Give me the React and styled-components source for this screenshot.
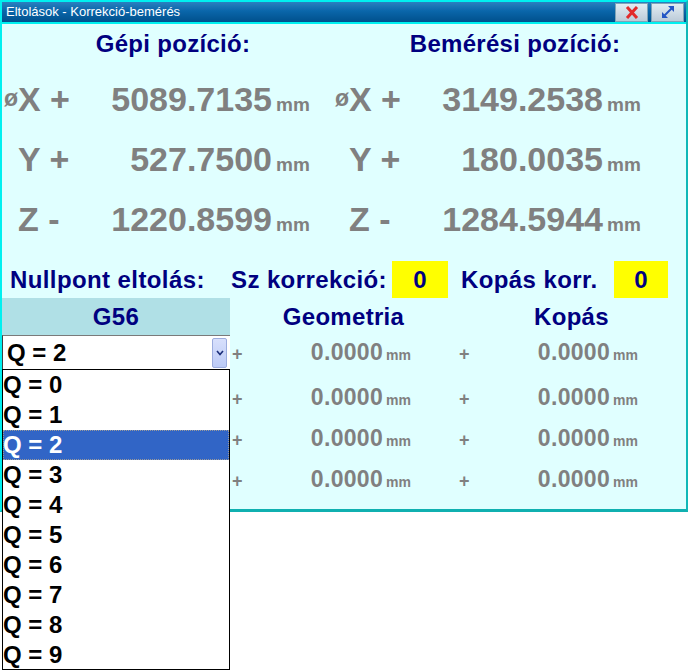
import React from 'react';
import styled, { createGlobalStyle } from 'styled-components';

const Global = createGlobalStyle`
  html, body { margin: 0; padding: 0; background: #ffffff; }
  body { font-family: "Liberation Sans", Arial, sans-serif; min-height: 672px; }
  #root { min-height: 672px; }
  * { box-sizing: border-box; }
`;

const NAVY = '#000080';
const GREY = '#808080';

const Window = styled.div`
  position: relative;
  width: 688px;
  height: 512px;
  border-left: 2px solid #00f0f0;
  border-top: 2px solid #00f0f0;
  border-right: 2px solid #10b8b8;
  border-bottom: 3px solid #10b0b0;
  background: #e0ffff;
  display: flex;
  flex-direction: column;
  overflow: visible;
`;

const TitleBar = styled.div`
  height: 22px;
  flex: none;
  border-bottom: 2px solid #00f0f0;
  background: linear-gradient(#2a80c0 0%, #0a66aa 45%, #00508c 100%);
  display: flex;
  align-items: center;
  justify-content: space-between;
  padding: 0 2px 0 4px;
`;

const TitleText = styled.span`
  color: #ffffff;
  font-size: 13px;
  line-height: 20px;
`;

const TitleButtons = styled.div`
  display: flex;
  gap: 3px;
  height: 19px;
`;

const TitleButton = styled.div`
  width: 33px;
  height: 19px;
  border: 1px solid #7fa4b8;
  background: linear-gradient(#e2ecf3, #bccbd8);
  display: flex;
  align-items: center;
  justify-content: center;
`;

const Body = styled.div`
  flex: 1;
  display: flex;
  flex-direction: column;
  overflow: visible;
`;

const HeadRow = styled.div`
  display: grid;
  grid-template-columns: 1fr 1fr;
  height: 40px;
  align-items: center;
  margin-bottom: 5px;
`;

const Heading = styled.div`
  text-align: center;
  color: ${NAVY};
  font-size: 24px;
  font-weight: bold;
  letter-spacing: 0.3px;
`;

const PosRow = styled.div`
  display: grid;
  grid-template-columns: 331px 1fr;
  height: 60px;
`;

const PosCell = styled.div`
  white-space: nowrap;
  line-height: 60px;
  font-size: 34px;
  font-weight: bold;
  color: ${GREY};
`;

const Diam = styled.span`
  display: inline-block;
  width: 16px;
  text-align: right;
  font-size: 23px;
  line-height: 1;
  vertical-align: 5px;
`;

const AxisLabel = styled.span`
  display: inline-block;
  width: 84px;
  white-space: pre;
`;

const BigValue = styled.span`
  display: inline-block;
  width: 170px;
  text-align: right;
`;

const BigUnit = styled.span`
  font-size: 19px;
  margin-left: 4px;
`;

const InfoRow = styled.div`
  display: flex;
  align-items: center;
  height: 37px;
  margin-top: 12px;
`;

const InfoLabel = styled.div`
  width: ${(p) => p.$w}px;
  margin-left: ${(p) => p.$ml || 0}px;
  padding-left: ${(p) => p.$pl || 0}px;
  color: ${NAVY};
  font-size: 24px;
  font-weight: bold;
  letter-spacing: 0.4px;
  white-space: nowrap;
`;

const YellowBox = styled.div`
  width: ${(p) => p.$w}px;
  height: 37px;
  background: #ffff00;
  color: ${NAVY};
  font-size: 24px;
  font-weight: bold;
  display: flex;
  align-items: center;
  justify-content: center;
`;

const TableHeader = styled.div`
  display: grid;
  grid-template-columns: 228px 227px 1fr;
  height: 37px;
  align-items: stretch;
`;

const HeaderCell = styled.div`
  display: flex;
  align-items: center;
  justify-content: center;
  background: ${(p) => (p.$active ? '#b0e0e6' : 'transparent')};
  color: ${NAVY};
  font-size: 24px;
  font-weight: bold;
  letter-spacing: 0.3px;
`;

const OffsetRow = styled.div`
  display: grid;
  grid-template-columns: 228px 227px 1fr;
  height: ${(p) => p.$h}px;
  margin-top: ${(p) => p.$mt || 0}px;
  align-items: center;
  overflow: visible;
`;

const Pair = styled.div`
  display: flex;
  align-items: baseline;
  color: ${GREY};
  font-weight: bold;
  white-space: nowrap;
`;

const Plus = styled.span`
  width: 24px;
  padding-left: 2px;
  font-size: 18px;
`;

const SmallValue = styled.span`
  width: 129px;
  text-align: right;
  font-size: 23px;
  letter-spacing: 0.3px;
`;

const SmallUnit = styled.span`
  font-size: 14px;
  margin-left: 3px;
`;

const ComboWrap = styled.div`
  position: relative;
  height: 34px;
  align-self: stretch;
  z-index: 10;
`;

const Combo = styled.div`
  height: 34px;
  background: #ffffff;
  border-top: 1px solid #7a7a7a;
  border-left: 1px solid #404040;
  display: flex;
  align-items: center;
  justify-content: space-between;
  padding-left: 4px;
  padding-right: 3px;
`;

const ComboText = styled.span`
  font-size: 24px;
  font-weight: bold;
  color: #000000;
`;

const ComboButton = styled.div`
  width: 15px;
  height: 30px;
  border: 1px solid #9cacde;
  border-radius: 2px;
  background: linear-gradient(#d8e0fc, #bccaf6);
  display: flex;
  align-items: center;
  justify-content: center;
`;

const List = styled.div`
  position: absolute;
  top: 34px;
  left: 0;
  width: 228px;
  height: 301px;
  background: #ffffff;
  border: 1px solid #000000;
  z-index: 10;
`;

const ListItem = styled.div`
  height: 30px;
  line-height: 30px;
  padding-left: 0;
  font-size: 24px;
  font-weight: bold;
  color: ${(p) => (p.$selected ? '#ffffff' : '#000000')};
  background: ${(p) => (p.$selected ? '#3165c6' : 'transparent')};
  outline: 1px dotted ${(p) => (p.$selected ? '#9a9a9a' : 'transparent')};
  outline-offset: -1px;
  white-space: pre;
`;

const CloseIcon = () => (
  <svg width="14" height="13" viewBox="0 0 14 13">
    <path d="M2 1 L12 12 M12 1 L2 12" stroke="#e22a2a" strokeWidth="3" fill="none" />
  </svg>
);

const MaxIcon = () => (
  <svg width="14" height="14" viewBox="0 0 14 14">
    <path d="M3.5 10.5 L10.5 3.5" stroke="#2456c4" strokeWidth="2" fill="none" />
    <polygon points="13,1 13,7 7,1" fill="#2456c4" />
    <polygon points="1,13 1,7 7,13" fill="#2456c4" />
  </svg>
);

const Chevron = () => (
  <svg width="8" height="6" viewBox="0 0 8 6">
    <path d="M1 1 L4 4.5 L7 1" stroke="#1c2e7a" strokeWidth="1.6" fill="none" />
  </svg>
);

const machine = [
  { d: true, label: 'X +', value: '5089.7135' },
  { d: false, label: 'Y +', value: '527.7500' },
  { d: false, label: 'Z -', value: '1220.8599' },
];
const measured = [
  { d: true, label: 'X +', value: '3149.2538' },
  { d: false, label: 'Y +', value: '180.0035' },
  { d: false, label: 'Z -', value: '1284.5944' },
];

const PosValue = ({ item }) => (
  <PosCell>
    <Diam>{item.d ? 'ø' : ''}</Diam>
    <AxisLabel>{item.label}</AxisLabel>
    <BigValue>{item.value}</BigValue>
    <BigUnit>mm</BigUnit>
  </PosCell>
);

const OffsetPair = () => (
  <Pair>
    <Plus>+</Plus>
    <SmallValue>0.0000</SmallValue>
    <SmallUnit>mm</SmallUnit>
  </Pair>
);

export default function App() {
  const items = Array.from({ length: 10 }, (_, i) => i);
  return (
    <>
      <Global />
      <Window>
        <TitleBar>
          <TitleText>Eltolások - Korrekció-bemérés</TitleText>
          <TitleButtons>
            <TitleButton><CloseIcon /></TitleButton>
            <TitleButton><MaxIcon /></TitleButton>
          </TitleButtons>
        </TitleBar>
        <Body>
          <HeadRow>
            <Heading>Gépi pozíció:</Heading>
            <Heading>Bemérési pozíció:</Heading>
          </HeadRow>
          {machine.map((m, i) => (
            <PosRow key={m.label}>
              <PosValue item={m} />
              <PosValue item={measured[i]} />
            </PosRow>
          ))}
          <InfoRow>
            <InfoLabel $w={229} $pl={8}>Nullpont eltolás:</InfoLabel>
            <InfoLabel $w={161}>Sz korrekció:</InfoLabel>
            <YellowBox $w={56}>0</YellowBox>
            <InfoLabel $w={153} $ml={13}>Kopás korr.</InfoLabel>
            <YellowBox $w={54}>0</YellowBox>
          </InfoRow>
          <TableHeader>
            <HeaderCell $active>G56</HeaderCell>
            <HeaderCell>Geometria</HeaderCell>
            <HeaderCell>Kopás</HeaderCell>
          </TableHeader>
          <OffsetRow $h={34}>
            <ComboWrap>
              <Combo>
                <ComboText>Q = 2</ComboText>
                <ComboButton><Chevron /></ComboButton>
              </Combo>
              <List>
                {items.map((i) => (
                  <ListItem key={i} $selected={i === 2}>{`Q = ${i}`}</ListItem>
                ))}
              </List>
            </ComboWrap>
            <OffsetPair />
            <OffsetPair />
          </OffsetRow>
          {[0, 1, 2].map((r) => (
            <OffsetRow key={r} $h={41} $mt={r === 0 ? 8 : 0}>
              <div />
              <OffsetPair />
              <OffsetPair />
            </OffsetRow>
          ))}
        </Body>
      </Window>
    </>
  );
}
